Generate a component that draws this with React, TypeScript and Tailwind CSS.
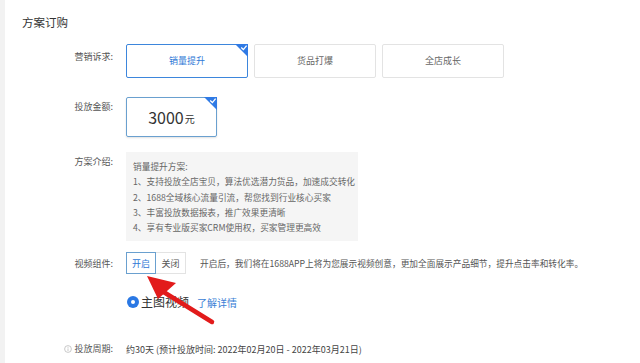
import React from "react";

const FONT = { fontFamily: '"Noto Sans CJK SC", "Noto Sans", sans-serif' };

function Corner() {
    return (
        <svg className="absolute -top-px -right-px" width="13" height="13" viewBox="0 0 13 13">
            <path d="M0 0 H13 V13 Z" fill="#2f7ae5" />
            <path d="M6.2 3.6 L8.4 5.6 L11.6 1.6" stroke="#fff" strokeWidth="1.3" fill="none" />
        </svg>
    );
}

function Row({ label, className = "", labelClass = "", children }: { label: React.ReactNode; className?: string; labelClass?: string; children: React.ReactNode }) {
    return (
        <div className={`flex ${className}`}>
            <div className={`w-[121px] shrink-0 text-right pr-[13px] text-[9px] text-[#555] ${labelClass}`}>{label}</div>
            <div className="flex-1 min-w-0">{children}</div>
        </div>
    );
}

const intro = [
    "1、支持投放全店宝贝，算法优选潜力货品，加速成交转化",
    "2、1688全域核心流量引流，帮您找到行业核心买家",
    "3、丰富投放数据报表，推广效果更清晰",
    "4、享有专业版买家CRM使用权，买家管理更高效",
];

export default function App() {
    return (
        <div className="relative flex w-[640px] h-[363px] overflow-hidden bg-white" style={FONT}>
            <div className="w-[5px] shrink-0 bg-[#f2f2f2]" />
            <div className="flex-1 pt-[14px]">
                <h2 className="pl-[17px] text-[11.5px] leading-[16px] text-[#333]">方案订购</h2>

                {/* 营销诉求 */}
                <Row label="营销诉求:" className="mt-[14px]" labelClass="pt-[6px]">
                    <div className="flex gap-[6px]">
                        <div className="relative w-[122px] h-[34px] flex items-center justify-center rounded-[2px] border border-[#3d86dc] text-[9px] text-[#2f78d6]">
                            销量提升
                            <Corner />
                        </div>
                        <div className="w-[122px] h-[34px] flex items-center justify-center rounded-[2px] border border-[#e3e3e3] text-[9px] text-[#666]">
                            货品打爆
                        </div>
                        <div className="w-[122px] h-[34px] flex items-center justify-center rounded-[2px] border border-[#e3e3e3] text-[9px] text-[#666]">
                            全店成长
                        </div>
                    </div>
                </Row>

                {/* 投放金额 */}
                <Row label="投放金额:" className="mt-[19px]" labelClass="pt-[3px]">
                    <div className="relative w-[91px] h-[40px] flex items-center justify-center rounded-[2px] border border-[#6aa0cf] shadow-[0_1px_2px_rgba(0,0,0,0.12)]">
                        <span className="text-[16px] text-[#333] leading-none">3000</span>
                        <span className="text-[10px] text-[#333] ml-[1px] mt-[3px]">元</span>
                        <Corner />
                    </div>
                </Row>

                {/* 方案介绍 */}
                <Row label="方案介绍:" className="mt-[15px]" labelClass="pt-[3px]">
                    <div className="w-[232px] bg-[#f5f5f5] pl-[7px] pt-[7px] pb-[6px] text-[8.7px] leading-[15.3px] text-[#666]">
                        <div>销量提升方案:</div>
                        {intro.map((t) => (
                            <div key={t} className="whitespace-nowrap">{t}</div>
                        ))}
                    </div>
                </Row>

                {/* 视频组件 */}
                <Row label="视频组件:" className="mt-[11px]" labelClass="pt-[5px]">
                    <div className="flex items-center">
                        <div className="flex h-[22px]">
                            <div className="w-[30px] flex items-center justify-center border border-[#6aa0cf] text-[9px] text-[#2f78d6]">开启</div>
                            <div className="w-[30px] flex items-center justify-center border border-l-0 border-[#e3e3e3] text-[9px] text-[#555]">关闭</div>
                        </div>
                        <span className="ml-[14px] text-[8.7px] text-[#555] whitespace-nowrap">
                            开启后，我们将在1688APP上将为您展示视频创意，更加全面展示产品细节，提升点击率和转化率。
                        </span>
                    </div>
                </Row>

                {/* 主图视频 */}
                <Row label="" className="mt-[20px]">
                    <div className="flex items-center h-[16px] pl-[1px]">
                        <span className="w-[12px] h-[12px] rounded-full bg-[#2a78e4] flex items-center justify-center">
                            <span className="w-[4px] h-[4px] rounded-full bg-white" />
                        </span>
                        <span className="ml-[2px] text-[12px] text-[#333]">主图视频</span>
                        <span className="ml-[8px] text-[10px] text-[#3b7fd6]">了解详情</span>
                    </div>
                </Row>

                {/* 投放周期 */}
                <Row
                    label={
                        <span className="inline-flex items-center gap-[2px]">
                            <svg width="8" height="8" viewBox="0 0 8 8">
                                <circle cx="4" cy="4" r="3.4" fill="none" stroke="#bbb" strokeWidth="0.8" />
                                <path d="M4 3.4 V6" stroke="#bbb" strokeWidth="0.8" />
                                <circle cx="4" cy="2.3" r="0.5" fill="#bbb" />
                            </svg>
                            投放周期:
                        </span>
                    }
                    className="mt-[32px]"
                >
                    <div className="text-[9px] leading-[16px] text-[#444] whitespace-nowrap">
                        约30天 (预计投放时间: 2022年02月20日 - 2022年03月21日)
                    </div>
                </Row>
            </div>

            {/* red annotation arrow */}
            <svg className="absolute left-0 top-0 pointer-events-none" width="640" height="363">
                <path d="M212 322 L162 291" stroke="#e21b1b" strokeWidth="4.5" strokeLinecap="round" />
                <path d="M147 276 L176 283 L158 299 Z" fill="#e21b1b" />
            </svg>
        </div>
    );
}
